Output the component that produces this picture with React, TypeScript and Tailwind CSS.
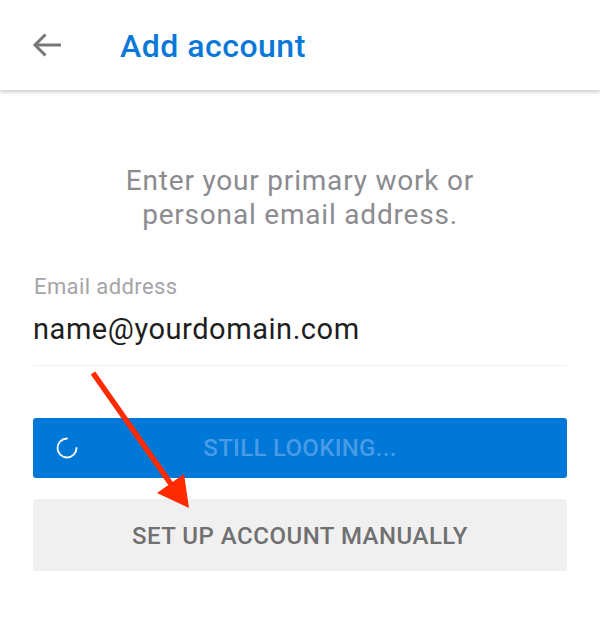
import React from "react";

export default function App() {
  return (
    <div className="relative w-[600px] h-[626px] bg-white overflow-hidden" style={{ fontFamily: "Roboto, 'Noto Sans', sans-serif" }}>
      <header className="h-[90px] bg-white flex items-center shadow-[0_2px_4px_rgba(0,0,0,0.22)] relative z-10">
        <div className="w-[120px] pl-[32px] flex items-center">
          <svg width="30" height="26" viewBox="0 0 30 26" fill="none">
            <path d="M29 13H3" stroke="#777777" strokeWidth="3" />
            <path d="M13.5 2.5L3 13l10.5 10.5" stroke="#777777" strokeWidth="3" />
          </svg>
        </div>
        <h1 className="text-[32px] leading-[40px] font-medium text-[#0a78d6] tracking-[0.5px] mt-[2px]">Add account</h1>
      </header>

      <main className="px-[33px]">
        <p className="mt-[74px] text-center text-[28px] leading-[34px] text-[#8b8b90] tracking-[0.8px]">
          Enter your primary work or
          <br />
          personal email address.
        </p>

        <div className="mt-[43px]">
          <div className="text-[22px] leading-[24px] text-[#a4a4a8] pl-[1px] tracking-[0.4px]">Email address</div>
          <div className="mt-[12px] text-[29px] leading-[36px] text-[#1e1e1e] tracking-[0.55px] pb-[18px] border-b border-[#f0f0f0]">
            name@yourdomain.com
          </div>
        </div>

        <div className="mt-[52px] relative h-[60px] rounded-[3px] bg-[#0078d7] flex items-center justify-center">
          <svg className="absolute left-[23px] top-[19px]" width="22" height="22" viewBox="0 0 22 22" fill="none">
            <path d="M11 1.5 A9.5 9.5 0 1 0 20.5 11" stroke="white" strokeWidth="1.8" strokeLinecap="round" />
          </svg>
          <span className="text-[24px] font-medium text-[#4a9be6] tracking-[0.3px]">STILL LOOKING...</span>
        </div>

        <div className="mt-[21px] h-[72px] rounded-[3px] bg-[#f0f0f0] flex items-center justify-center">
          <span className="text-[24px] font-medium text-[#707070] tracking-[0.5px] mt-[2px]">SET UP ACCOUNT MANUALLY</span>
        </div>
      </main>

      <svg className="absolute left-0 top-0 pointer-events-none z-20" width="600" height="626" viewBox="0 0 600 626">
        <line x1="93" y1="373" x2="173" y2="487" stroke="#ff2a00" strokeWidth="5.5" />
        <polygon points="157,493 184,474 189,508" fill="#ff2a00" />
      </svg>
    </div>
  );
}
